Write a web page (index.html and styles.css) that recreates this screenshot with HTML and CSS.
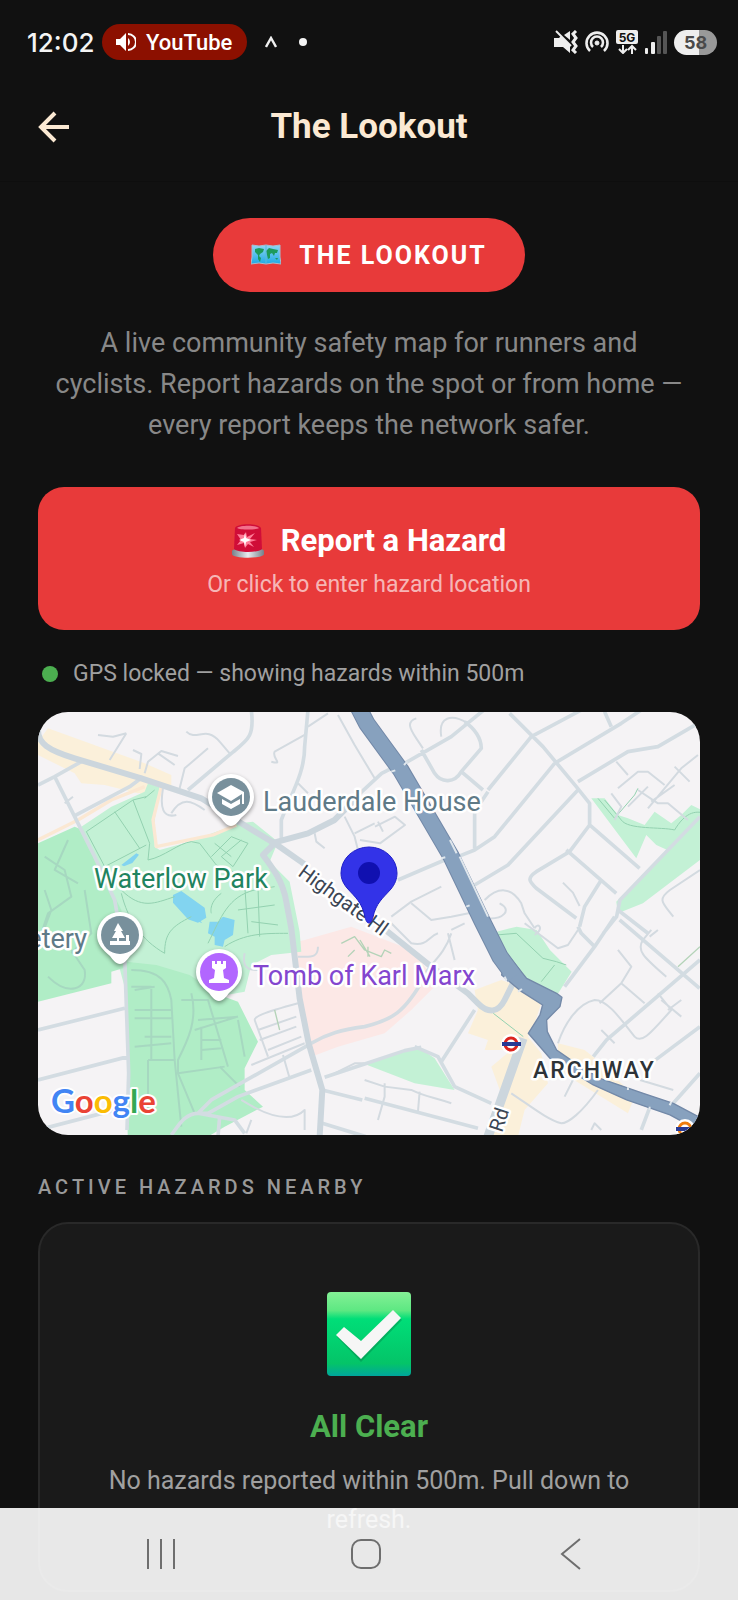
FILE: index.html
```html
<!DOCTYPE html>
<html lang="en">

<head>
    <meta charset="UTF-8">
    <meta name="viewport" content="width=device-width, initial-scale=1.0">
    <title>The Lookout</title>
    <link rel="stylesheet" href="styles.css">
</head>

<body>

    <!-- Status bar -->
    <div class="status-bar">
        <span class="clock">12:02</span>
        <span class="media-chip">
            <svg width="20" height="20" viewBox="0 0 20 20">
                <path d="M0 7h4l6-6v18l-6-6H0z" fill="#fff" />
                <path d="M12 6a5 5 0 0 1 0 8z" fill="#fff" />
                <path d="M12 2a8 8 0 0 1 0 16" fill="none" stroke="#fff" stroke-width="2" />
            </svg>
            YouTube
        </span>
        <svg class="caret" width="12" height="12" viewBox="0 0 12 12">
            <path d="M1 11L6 2l5 9" fill="none" stroke="#f0f0f0" stroke-width="2.4" />
        </svg>
        <span class="more-dot"></span>
        <div class="status-icons">
            <svg width="24" height="24" viewBox="0 0 24 24">
                <path d="M0 8h5l2-2 9 9v8l-7-6H0z" fill="#eee" />
                <path d="M10 5l6-4v9z" fill="#eee" />
                <path d="M2 1l15 15" stroke="#eee" stroke-width="2" />
                <path d="M22 1l-3 3 3 4-3 4 3 4-3 4 3 3" fill="none" stroke="#eee" stroke-width="3" />
            </svg>
            <svg width="24" height="24" viewBox="0 0 24 24" fill="none" stroke="#eee" stroke-width="2.6">
                <path d="M5 21a10.500 10.500 0 1 1 14 0" />
                <path d="M8 17a6 6 0 1 1 8 0" />
                <circle cx="12" cy="13" r="2" fill="#eee" stroke-width="1" />
            </svg>
            <svg width="22" height="24" viewBox="0 0 22 24">
                <rect width="22" height="14" rx="2" fill="#eee" />
                <text x="11" y="12" class="net-label">5G</text>
                <path d="M7 15v7M3 19l4 4 4-4M16 24v-7M12 20l4-4 4 4" fill="none" stroke="#eee" stroke-width="2" />
            </svg>
            <svg width="22" height="24" viewBox="0 0 22 24">
                <rect x="0" y="18" width="3" height="6" rx="1" fill="#eee" />
                <rect x="6" y="12" width="4" height="12" rx="1" fill="#eee" />
                <rect x="12" y="6" width="4" height="18" rx="1" fill="#555" />
                <rect x="18" y="1" width="4" height="23" rx="1" fill="#555" />
            </svg>
            <span class="battery">58</span>
        </div>
    </div>

    <!-- Header -->
    <header class="header">
        <button class="back-btn" aria-label="Back">
            <svg width="32" height="32" viewBox="0 0 32 32" fill="none" stroke="#fbe9d3" stroke-width="4">
                <path d="M31 16H3M17 2L3 16l14 14" />
            </svg>
        </button>
        <h1>The Lookout</h1>
    </header>

    <!-- Main Content -->
    <main class="content">
        <div class="badge">
            <svg width="30" height="22" viewBox="0 0 30 22">
                <defs>
                    <linearGradient id="sea" x1="0" y1="0" x2="0" y2="1">
                        <stop offset="0" stop-color="#8fd6f4" />
                        <stop offset="1" stop-color="#1fa9e4" />
                    </linearGradient>
                </defs>
                <path d="M1 1l7 1 7-1 7 1 7-1v12l1 7-8-1-7 1-7-1-8 1 1-7z" fill="url(#sea)" stroke="#a9bccb" stroke-width="1" />
                <path d="M4 5l4-1 5 1-1 3-3 2-1 2 2 2-1 4-2-3 0-4-3-3zM15 7l3-3 4 1 5 1-1 3-2 0-1 3-2-3-2 1 0 4-2 1-1-4zM24 14l3 0-1 2z" fill="#1d9a5b" />
                <path d="M15 1v18" stroke="#5bb9dc" stroke-width="1" />
            </svg>
            <span>THE LOOKOUT</span>
        </div>

        <p class="intro">A live community safety map for runners and<br>cyclists. Report hazards on the spot or from home — every report keeps the network safer.</p>

        <button class="report-btn">
            <span class="report-title">
                <svg width="32" height="34" viewBox="0 0 32 34">
                    <defs>
                        <linearGradient id="base" x1="0" y1="0" x2="1" y2="0">
                            <stop offset="0" stop-color="#76808a" />
                            <stop offset=".5" stop-color="#e8ecef" />
                            <stop offset="1" stop-color="#76808a" />
                        </linearGradient>
                    </defs>
                    <path d="M0 27c0-4 32-4 32 0v3c0 5-32 5-32 0z" fill="url(#base)" />
                    <path d="M3 4c2-5 24-5 26 0l1 21c-4 4-24 4-28 0z" fill="#d00d38" />
                    <path d="M5 4c3-3 19-3 22 0-3 2-19 2-22 0z" fill="#f2708b" />
                    <path d="M5 10l7 1 2-3 1 5 8-4-5 6 7 1-7 2 4 5-6-3-3 4-1-5-7 2 4-5z" fill="#ff7d98" />
                    <path d="M13 9l1 5 5 2-5 2-1 5-1-5-5-2 5-2z" fill="#fff" />
                </svg>
                Report a Hazard
            </span>
            <span class="report-sub">Or click to enter hazard location</span>
        </button>

        <div class="gps-status">
            <span class="gps-dot"></span>
            <span>GPS locked — showing hazards within 500m</span>
        </div>

        <!-- Map -->
        <div class="map">
            <svg viewBox="0 0 662 423" preserveAspectRatio="xMidYMid slice">
                <rect width="662" height="423" fill="#f5f3f5" />
                <g transform="translate(0 -2) scale(.3333)">
                    <!-- Built up areas -->
                    <path class="built" d="M30 55L320 160 400 195V230L300 250 200 225 130 220 110 190 0 135V95z" />
                    <path class="built" d="M300 225l40 10-30 30zM1310 840l80-30 60 20 60 50-20 60-20 40 40 50 20 90-70 80-20 80h-90l10-70 40-30-40-110 60-50-80 0 10-30-60-20 30-70zM1560 1000l80 20 50 40 100 100-20 50-80-50-130-80z" />
                    <path class="hospital" d="M620 730l180-40 140-40 180 70 80 100-80 80-80 70-140 40-80 30-30-170-20-190z" />

                    <!-- Parks -->
                    <path class="park" d="M130 350l90-60 100-45 10-25 35 10-15 100 0 80 15 10 90-25 80-30 70-25 40-5 75 60-25 60 60 60 30 150 5 60-90 10-60 30-20 80-340 60z" />
                    <path class="park-edge" d="M0 390l120-60 100-60 100-40M370 230l-25 100 10 80 170-35 70-30" />
                    <path class="cemetery" d="M0 400l110-50 25 10 70 150 45 90 20 170-50 15 0 35-220 55z" />
                    <path class="cemetery" d="M265 755l90 10 100 30 90 60 55 20 60 120-40 80v65l55 50-115 60-100 60-70 45-25 40H270z" />
                    <path class="park" d="M1660 265l40 0 40 50 30 10 50 20 30-40 50 35 30-25 30-30 40 20v30l-100 90-45-20-30-30-30 70zM1735 575L1986 320V450L1815 580l-75 30z" />
                    <path class="park" d="M1376 665l60-15 60 10 40 60 65 65-40 65-50 0-90-60zM980 1062l100-30 60-22 50 35 60 95-120-20z" />

                    <!-- Ponds -->
                    <path class="water" d="M405 555l25-12 70 50 5 30-25 15-30-10-45-50zM250 465l45-35 8 4-20 25-25 10zM515 635l25 0 15-15 35 10-5 45-25 15-5 20-25-5 0-25-20-10zM470 630h15l8 10z" />

                    <!-- Paths in the park -->
                    <path class="path" d="M145 365l140-95 40-10M145 365l55 105 125-65M230 305l75 110M320 265l30-25M285 270l50 130-5 50c50-10 90-50 130-55l25 5 50 65 75 30M520 440l60-60 50 20-45 70-35-30 60-50M530 400l50 40M550 550c-40 30-30 60-30 60M250 550c20 80 60 140 130 180M380 730c0-60 20-80 80-110M510 700c40-80 60-140 140-160l60-10M620 520l10 150M660 530l5 150M600 600l110-15M640 635l80 10M560 710c60-40 120-40 190-40M250 540c60 60 100 40 160 20" />
                    <path class="path" d="M1700 270l50 60c20 30 120 20 160 30 30-50 60-60 90-50M1680 265l50 60M1730 325l60-70 10-20M1375 675l60-5 80 75 40 10 30 10M1510 815l40-50M1366 910l90 70" />

                    <!-- Cemetery lanes -->
                    <path class="lane" d="M280 780c90 0 110 40 120 90l10 180 20 200M290 900h110M290 925h110M320 980h80M290 1010l110-10M340 830v220M340 830h-60M430 870h80l60 200M460 850c20 80-10 140-40 200l0 40 140-20M470 960l130-40M480 930l120-10M490 990h60M490 1020l60-5M490 950v100M600 930l20 110M420 1090l50 120M330 1050h80M290 840l60-10M545 1070l60 60M330 1050v150" />
                    <path class="lane" d="M20 440l60 40 20 80-70 50-20 60M90 390l-40 90 70 40M140 540l20 130-60 60M20 540l20 60-30 80M30 800c60 60 120 40 110-20l-40-60" />

                    <!-- Minor streets -->
                    <path class="minor" d="M180 75l45 5 40-10M265 70l-50 80M285 120l25 12-5 45M320 190l10-35 40-32 50 15M360 130l50 35M445 65c30 30 60-20 100 30l30 35M510 115l-70 60-15 60M870 10l-60 40M800 75l-90 50c-10 20 30 40-10 30M375 235c-10 60 0 90 40 80M400 310c30-50 60-40 100-10M780 220l30 30M900 15l50 90 60 100M80 280l25-20M920 320l30 60 10 40M950 370l60-30M830 370l5 25 25 20" />
                    <path class="minor" d="M1135 25c-30 10-20 30 0 60l20 30M1210 80c-10-60 30-70 80-40M966 390l60 10 75-55-30-25-60 30M1035 365l-15-30M1060 620l60-45 90-45M1120 580l60 50 60-10 100-20M1340 570c40-40 80-40 110 10l10 30 30 45M1385 580c40 20 10 50-40 45M1575 518l30 30 20 40M1735 155l35 40M1740 235l60-50 30 0 50 40M1720 250l30 40-20 40M1770 290l60-60M1800 240l60 40 30 0 60 50M1830 295l100-120 50-40M1910 170l45 45M1840 275l70-50M1986 480l-90 60c-40 30-20 40 10 80" />
                    <path class="minor" d="M1060 640l60 60c50 10 50-20 80-30M1240 660l40-20M1230 670l20 80M1240 670c-20 60-50 80-80 120M780 740h30c30 0 30-20 30-30M620 730c-10 50 20 50 40 50M650 930c0-10 20-20 130-50M650 930l40 110M660 960l115-40M665 990l110-40M690 1020l100-40M640 1065l160-65M735 1035l20 70M610 1170c80 50 150 70 190 30l0 60M640 1230l-15 40M870 1100l80-40h30M980 1110l60 20 80 10c40 20 60 20 120 40M1040 1120v40l-20 70M1145 1145l-5 60" />
                    <path class="minor" d="M1460 640l100 75 30-10 30-45M1490 655c10-20 30 0 0 20M1740 720l40 50-30 50-65 60M1840 660l-25 30c-20 30 0 50 70 110M1860 660l-25 20M1560 1000c20-60 60-120 110-130 40 0 80 60 120 110 20 20 40 0 110-80l-40-50M1690 960l40 40M1750 820l70 60M1870 870l60 50M1890 900l40-30M1580 1160l40-80M1420 1150c60 40 110 80 150 90 20 0 60-30 110-100M1806 1110l100 30M1660 1260l10-20 20 20" />
                    <path class="hospital-path" d="M910 700l40-20 30 40 50 20 10-20 20 10M930 740l20-20M990 740l0-30M710 900l15 60M1920 770l66-60M966 690l30 50" />

                    <!-- Streets -->
                    <path class="street" d="M0 225l50-25 80-45M50 200l60 120 60 120 60 130 30 170 12 350-5 170M105 320l170-90 40-30M0 960l260-65M0 1110l270-70M0 1260l270-70M640 0c10 80-10 90-60 130l-130 110M810 0l-10 110c0 80-40 140-70 220v60M966 250l65-60 40-20M1100 160l140-80 110-90M1150 120l40 70c20 30 60 30 80-5l60-70c0-30-20-60-50-80M1270 185l65 55M1415 10l100 100 100 120 40 50v65M1350 240L1480 80M1480 80l150-80M1350 245l-40 60v110M1550 160l200-120 60-40M1720 50l-20-45M1550 160l-180 220-60 40-50 20M1310 525l100-60L1620 240M1620 215l150-90 90-15 120-70M1655 345l-60 80-100 60c-30 20-20 30 0 50l120 90M1585 420l150 130M1655 345l150 130M1690 510l-50 80-15 60M1740 600l90 70M1080 510l140-60" />
                    <path class="street" d="M1986 320l-240 250-10 50-40 50M1730 620l-60 90-90 120M1745 630l240 205M1620 650l10 20 40 40M1986 750l-280 240-40 50M1986 950l-80 60-80 60M1986 1090l-80 90M1840 1180l-30 80M1310 900l-100 155M1130 1010l70 30 50 90 110 50M820 1000c50-30 90-40 160-50 80-20 120-40 180-150M980 1062l120-40 50-10M980 1062l-120 40M980 1165l340 90" />
                    <path class="street" d="M820 1080l-220 80-90 50h-30l40-40 300-170M480 1210c-40 0-60 40-80 65M545 1220l-5 60M480 1210l110 20 30 40M853 1140l120 30M853 1240l130 40" />

                    <!-- Main streets -->
                    <path class="main" d="M0 60c0 40 30 60 110 85l200 60 180 60 120 75 100 60 100 70M1030 650l150 120 110 80 30 30c30 30 60 30 80-10l30-60" />
                    <path class="main" d="M700 400l110-30 80-40 60-60" />
                    <path class="main" d="M710 400l-35 35c30 40 60 80 70 140l15 80 25 210 27 135 41 140-8 140" />
                    <path class="main wide" d="M1455 985l-60 170-50 140" />

                    <!-- A1 -->
                    <path class="trunk-edge" d="M950-30L986 40 1088 180 1240 440 1331 630 1386 740 1430 800" />
                    <path class="trunk-outline" d="M1406 730L1466 805 1556 850 1572 862 1566 890 1526 930 1528 965 1556 1020 1606 1055 1686 1105 1816 1150 1906 1180 1990 1225V1266L1896 1215 1766 1170 1666 1125 1536 1045 1471 970 1506 915 1514 885 1451 845 1391 795z" />
                    <path class="trunk" d="M950-30L986 40 1088 180 1240 440 1331 630 1386 740 1430 800" />
                    <path class="crossing" d="M1108 155l-10 10M1060 185l12-4M1210 445l12-3M1236 390l20 40M1265 440l85 180M1285 590l10-4M1400 800l6 12M1440 845l12-8M1770 1140v-8M1895 1186l5-10M1835 1200v-10" />
                </g>

                <!-- Street names -->
                <text class="label road" transform="translate(259 163) rotate(36)">Highgate Hl</text>
                <text class="label road" transform="translate(464 421) rotate(-72)">Rd</text>

                <!-- Places -->
                <text class="label" x="225" y="99">Lauderdale House</text>
                <text class="label park-name" x="56" y="176">Waterlow Park</text>
                <text class="label" x="49" y="236" text-anchor="end">etery</text>
                <text class="label sight" x="215" y="273">Tomb of Karl Marx</text>
                <text class="label town" x="495" y="366">ARCHWAY</text>

                <!-- Place markers -->
                <g transform="translate(193 85)">
                    <path class="marker" d="M0 29c-4 0-7-4-10-8-7-6-13-12-13-21a23 23 0 1 1 46 0c0 9-6 15-13 21-3 4-6 8-10 8z" />
                    <circle r="19" fill="#78909c" />
                    <path d="M-14-4L0-12l13 7v12h-2v-10L0 4zM-9 2L0 7l9-5v5L0 12l-9-5z" fill="#fff" />
                </g>
                <g transform="translate(82 223)">
                    <path class="marker" d="M0 29c-4 0-7-4-10-8-7-6-13-12-13-21a23 23 0 1 1 46 0c0 9-6 15-13 21-3 4-6 8-10 8z" />
                    <circle r="19" fill="#78909c" />
                    <path d="M-2-12L3-4H1l4 7H-1v3H6V0h3v6h1v4h-20V6h7V3h-5l4-7h-2z" fill="#fff" />
                </g>
                <g transform="translate(181 260)">
                    <path class="marker" d="M0 29c-4 0-7-4-10-8-7-6-13-12-13-21a23 23 0 1 1 46 0c0 9-6 15-13 21-3 4-6 8-10 8z" />
                    <circle r="19" fill="#b266ff" />
                    <path d="M-7-11h3v3h2v-3h4v3h2v-3h3v7l-3 2 1 8 5 2v3h-20V8l5-2 1-8-3-2z" fill="#fff" />
                </g>

                <!-- Stations -->
                <circle cx="473" cy="332" r="10" fill="#fff" />
                <circle cx="473" cy="332" r="6" fill="#fff" stroke="#dc241f" stroke-width="3" />
                <rect x="464" y="330" width="19" height="4" fill="#283a94" />
                <circle cx="647" cy="417" r="10" fill="#fff" />
                <circle cx="647" cy="417" r="6" fill="#fff" stroke="#ee7c0e" stroke-width="3" />
                <rect x="638" y="415" width="19" height="4" fill="#283a94" />

                <!-- Current position -->
                <path d="M331 211c-2 0-3-2-4-6-3-15-10-20-18-29-5-6-6-11-6-15a28 26 0 0 1 56 0c0 6-2 11-6 16-8 9-15 14-18 28-1 4-2 6-4 6z" fill="#3333e8" stroke="#2020c8" stroke-width="1" />
                <circle cx="331" cy="161" r="11" fill="#1010b0" />

                <text class="google" x="13" y="401"><tspan fill="#4285f4">G</tspan><tspan fill="#ea4335">o</tspan><tspan fill="#fbbc04">o</tspan><tspan fill="#4285f4">g</tspan><tspan fill="#34a853">l</tspan><tspan fill="#ea4335">e</tspan></text>
            </svg>
        </div>

        <h2>ACTIVE HAZARDS NEARBY</h2>

        <section class="card">
            <svg width="84" height="84" viewBox="0 0 84 84">
                <defs>
                    <linearGradient id="tick" x1="0" y1="0" x2="0" y2="1">
                        <stop offset="0" stop-color="#84f096" />
                        <stop offset=".22" stop-color="#5de882" />
                        <stop offset=".32" stop-color="#00de78" />
                        <stop offset=".85" stop-color="#04c468" />
                        <stop offset="1" stop-color="#00a69c" />
                    </linearGradient>
                </defs>
                <rect width="84" height="84" rx="4" fill="url(#tick)" />
                <path d="M10 45l8-8 16 14L67 20l8 8-41 42z" fill="#067a46" opacity=".4" />
                <path d="M9 43l8-8 17 14 32-31 8 8-40 41z" fill="#f6f6f6" />
            </svg>
            <h3>All Clear</h3>
            <p>No hazards reported within 500m. Pull down to refresh.</p>
        </section>
    </main>

    <!-- System navigation -->
    <nav class="nav-bar">
        <button aria-label="Recent apps">
            <svg width="32" height="32" viewBox="0 0 32 32" fill="none" stroke="#6e6e6e" stroke-width="2">
                <path d="M3 1v30M16 1v30M29 1v30" />
            </svg>
        </button>
        <button aria-label="Home">
            <svg width="32" height="32" viewBox="0 0 32 32" fill="none" stroke="#6e6e6e" stroke-width="2">
                <rect x="2" y="2" width="28" height="28" rx="9" />
            </svg>
        </button>
        <button aria-label="Back">
            <svg width="32" height="32" viewBox="0 0 32 32" fill="none" stroke="#6e6e6e" stroke-width="2">
                <path d="M25 1L7 16l18 15" />
            </svg>
        </button>
    </nav>
</body>

</html>
```

FILE: styles.css
```css
/* Global Styles */
* {
    box-sizing: border-box;
}

body {
    margin: 0;
    font-family: Roboto, sans-serif;
    background-color: #111;
    color: #a0a0a0;
}

svg {
    display: block;
    flex-shrink: 0;
}

button {
    font-family: inherit;
    border: none;
    background: none;
    padding: 0;
    cursor: pointer;
}

/* Status Bar */
.status-bar {
    display: flex;
    align-items: center;
    height: 84px;
    padding: 0 21px 0 27px;
    color: #f4f4f4;
    font-family: Inter, sans-serif;
}

.clock {
    width: 75px;
    font-size: 26px;
    font-weight: 500;
}

.media-chip {
    display: flex;
    align-items: center;
    gap: 10px;
    height: 36px;
    padding: 0 15px 0 14px;
    border-radius: 18px;
    background-color: #8c1000;
    color: #fff;
    font-family: Roboto, sans-serif;
    font-size: 22px;
    font-weight: 500;
}

.caret {
    margin-left: 18px;
}

.more-dot {
    width: 8px;
    height: 8px;
    margin-left: 22px;
    border-radius: 50%;
    background-color: #f4f4f4;
}

.status-icons {
    display: flex;
    align-items: center;
    gap: 7px;
    margin-left: auto;
}

.net-label {
    font-family: Inter, sans-serif;
    font-size: 12px;
    font-weight: 700;
    text-anchor: middle;
    fill: #111;
}

.battery {
    width: 43px;
    height: 25px;
    border-radius: 13px;
    background: linear-gradient(90deg, #eee 58%, #999 58%);
    color: #4a4a4a;
    font-size: 18px;
    font-weight: 700;
    line-height: 25px;
    text-align: center;
}

/* Header */
.header {
    display: grid;
    grid-template-columns: 32px 1fr 32px;
    align-items: center;
    height: 98px;
    padding: 0 38px 12px;
    border-bottom: 1px solid #0e0e0e;
}

.header h1 {
    margin: 0;
    color: #fbe9d3;
    font-size: 35px;
    font-weight: 700;
    text-align: center;
}

/* Main Content */
.content {
    display: flex;
    flex-direction: column;
    padding: 36px 38px 7px;
}

.badge {
    display: flex;
    align-items: center;
    align-self: center;
    gap: 18px;
    height: 74px;
    padding: 0 38px;
    border-radius: 37px;
    background-color: #e83a3a;
    color: #fff;
    font-size: 25px;
    font-weight: 700;
    letter-spacing: 2px;
}

.intro {
    margin: 31px 0 41px;
    color: #888;
    font-size: 27px;
    line-height: 41px;
    text-align: center;
}

.report-btn {
    display: flex;
    flex-direction: column;
    align-items: center;
    justify-content: center;
    gap: 8px;
    height: 143px;
    padding-top: 4px;
    border-radius: 26px;
    background-color: #e83a3a;
    color: #fff;
}

.report-title {
    display: flex;
    align-items: center;
    gap: 17px;
    font-size: 31px;
    font-weight: 700;
    line-height: 40px;
}

.report-sub {
    color: rgba(255, 255, 255, 0.65);
    font-size: 23px;
    line-height: 32px;
}

.gps-status {
    display: flex;
    align-items: center;
    gap: 15px;
    padding: 28px 4px 22px;
    font-size: 23px;
    line-height: 32px;
}

.gps-dot {
    width: 16px;
    height: 16px;
    border-radius: 50%;
    background-color: #4caf50;
}

/* Map */
.map {
    border-radius: 30px;
    overflow: hidden;
}

.map svg {
    width: 100%;
    height: auto;
}

.map path {
    stroke-linejoin: round;
}

.built {
    fill: #fbf0da;
}

.hospital {
    fill: #fce8e6;
}

.park {
    fill: #c3f1d5;
}

.park-edge {
    fill: none;
    stroke: #fbe8d3;
    stroke-width: 10;
}

.cemetery {
    fill: #b0edc6;
}

.water {
    fill: #82d4f0;
}

.path,
.lane,
.minor,
.street,
.main,
.trunk,
.trunk-edge,
.crossing,
.hospital-path {
    fill: none;
}

.path {
    stroke: #93d1b0;
    stroke-width: 3;
}

.lane {
    stroke: #a6d8c0;
    stroke-width: 6;
}

.hospital-path {
    stroke: #b4d3b8;
    stroke-width: 4;
}

.minor {
    stroke: #d3dae0;
    stroke-width: 6;
}

.street {
    stroke: #d3dce2;
    stroke-width: 11;
}

.main {
    stroke: #ccd6dd;
    stroke-width: 18;
}

.wide {
    stroke-width: 28;
}

.trunk-edge {
    stroke: #7389a8;
    stroke-width: 52;
}

.trunk {
    stroke: #87a1be;
    stroke-width: 46;
}

.trunk-outline {
    fill: #87a1be;
    stroke: #7389a8;
    stroke-width: 4;
}

.crossing {
    stroke: #dfe6ec;
    stroke-width: 6;
}

.label {
    fill: #5f7a87;
    stroke: #fff;
    stroke-width: 5px;
    stroke-linejoin: round;
    paint-order: stroke;
    font-size: 27px;
}

.park-name {
    fill: #1f8460;
}

.sight {
    fill: #8346cf;
}

.road {
    fill: #3c4654;
    font-size: 20px;
}

.town {
    fill: #2e3338;
    font-size: 23px;
    font-weight: 500;
    letter-spacing: 2px;
}

.marker {
    fill: #fff;
    filter: drop-shadow(0 2px 2px rgba(0, 0, 0, 0.4));
}

.google {
    stroke: #fff;
    stroke-width: 4px;
    stroke-linejoin: round;
    paint-order: stroke;
    font-family: Lato, sans-serif;
    font-size: 33px;
    font-weight: 700;
}

/* Hazard List */
h2 {
    margin: 40px 0 23px;
    color: #999;
    font-size: 20px;
    font-weight: 500;
    line-height: 24px;
    letter-spacing: 4px;
}

.card {
    display: flex;
    flex-direction: column;
    align-items: center;
    padding: 68px 48px 51px;
    border: 2px solid #292929;
    border-radius: 30px;
    background-color: #1a1a1a;
    text-align: center;
}

.card h3 {
    margin: 31px 0 14px;
    color: #4caf50;
    font-size: 31px;
    font-weight: 700;
    line-height: 40px;
}

.card p {
    max-width: 540px;
    margin: 0;
    font-size: 25px;
    line-height: 39px;
}

/* System Navigation */
.nav-bar {
    position: fixed;
    left: 0;
    right: 0;
    bottom: 0;
    display: flex;
    justify-content: center;
    height: 92px;
    padding-right: 6px;
    background-color: rgba(255, 255, 255, 0.9);
}

.nav-bar button {
    display: flex;
    align-items: center;
    justify-content: center;
    width: 28%;
}
```
